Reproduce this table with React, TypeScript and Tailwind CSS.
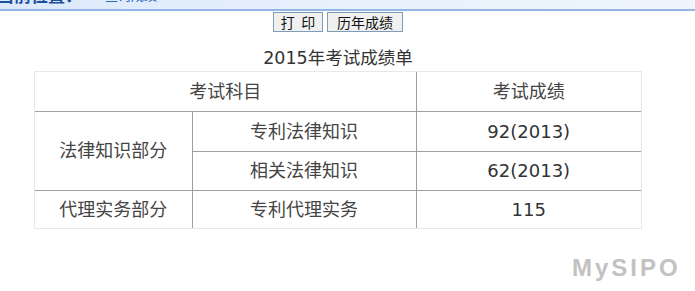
export default function App() {
  const font = { fontFamily: '"DejaVu Sans", "Noto Sans CJK SC", sans-serif' };
  return (
    <div className="relative w-[695px] h-[291px] overflow-hidden bg-white text-[#444]" style={font}>
      {/* 当前位置 bar, cut off at the top */}
      <div className="h-[11px] overflow-hidden border-b-2 border-[#93b6e4] bg-gradient-to-r from-[#dce9f9] via-[#e8f1fc] to-[#eef5fd]">
        <div className="flex items-end gap-[6px] -mt-[15px] -ml-[3px] h-[22px] leading-[22px]">
          <span className="text-[17px] font-bold text-[#1d4f9e]">当前位置：</span>
          <span className="text-[13px] text-[#2b66bd]">&gt;</span>
          <span className="text-[13px] text-[#2b66bd]">查询成绩</span>
        </div>
      </div>

      <div className="ml-[34px] w-[608px]">
        <div className="flex justify-center gap-[4px] mt-px">
          <button
            className="w-[50px] h-[20px] border border-[#7f9db9] bg-[#f0f0f0] text-[14px] leading-[18px] text-[#111]"
            style={{ fontFamily: '"Noto Sans CJK SC", sans-serif' }}
          >
            打&nbsp;&nbsp;印
          </button>
          <button
            className="w-[76px] h-[20px] border border-[#7f9db9] bg-[#f0f0f0] text-[14px] leading-[18px] text-[#111]"
            style={{ fontFamily: '"Noto Sans CJK SC", sans-serif' }}
          >
            历年成绩
          </button>
        </div>

        <div className="h-[39px] pt-[14px] text-center text-[17.5px] leading-[24px] text-[#333]">
          2015年考试成绩单
        </div>

        <div className="border border-[#e8e8e8]">
          <table className="w-full border-collapse text-[18px] text-center">
            <colgroup>
              <col className="w-[157px]" />
              <col className="w-[224px]" />
              <col />
            </colgroup>
            <tbody>
              <tr className="h-[39px]">
                <td colSpan={2} className="border-r border-[#a0a0a0]">
                  考试科目
                </td>
                <td>考试成绩</td>
              </tr>
              <tr className="h-[40px]">
                <td rowSpan={2} className="border-t border-r border-[#a0a0a0]">
                  法律知识部分
                </td>
                <td className="border-t border-r border-[#a0a0a0]">专利法律知识</td>
                <td className="border-t border-[#a0a0a0] text-[#333]">92(2013)</td>
              </tr>
              <tr className="h-[39px]">
                <td className="border-t border-r border-[#a0a0a0]">相关法律知识</td>
                <td className="border-t border-[#a0a0a0] text-[#333]">62(2013)</td>
              </tr>
              <tr className="h-[38px]">
                <td className="border-t border-r border-[#a0a0a0]">代理实务部分</td>
                <td className="border-t border-r border-[#a0a0a0]">专利代理实务</td>
                <td className="border-t border-[#a0a0a0] text-[#333]">115</td>
              </tr>
            </tbody>
          </table>
        </div>
      </div>

      {/* watermark */}
      <div
        className="absolute left-[572px] top-[250px] text-[24px] font-bold tracking-[3px] text-[#c2c2c2]"
        style={{ fontFamily: '"Liberation Sans", Arial, sans-serif' }}
      >
        MySIPO
      </div>
    </div>
  );
}
